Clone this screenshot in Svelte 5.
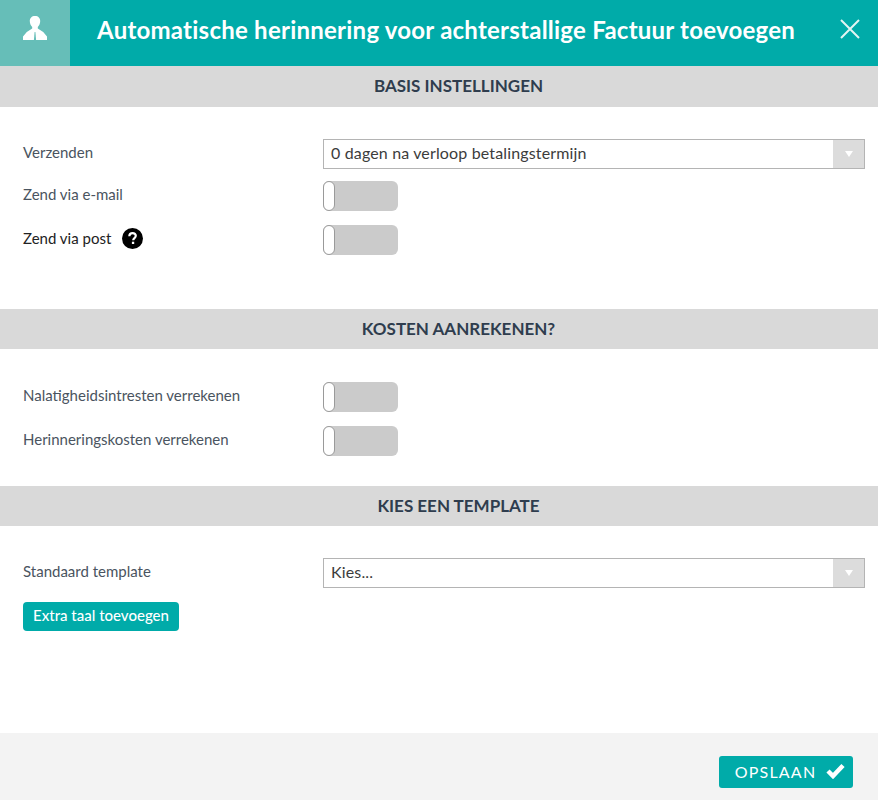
<script lang="ts">
	const arrow = 'M0 0h8L4 6z';
</script>

<div class="modal">
	<header class="head">
		<div class="icon-box">
			<svg width="24" height="24" viewBox="0 0 24 24">
				<path fill="#fff" d="M12 0c3.300 0 5.200 2.100 5.200 5 0 2.500-1 4.600-2.400 5.900v1.700l5.400 3.500 3.800 4.300V24H.0v-3.600l3.800-4.300 5.400-3.500v-1.700C7.800 9.600 6.800 7.500 6.800 5 6.800 2.100 8.700 0 12 0z" />
				<path fill="#66beb8" d="M11.600 16h.8l.7 8h-2.200z" />
			</svg>
		</div>
		<h1>Automatische herinnering voor achterstallige Factuur toevoegen</h1>
		<svg class="close" width="20" height="20" viewBox="0 0 20 20">
			<path d="M1 1l18 18M19 1L1 19" stroke="#e2f5f3" stroke-width="2" fill="none" />
		</svg>
	</header>

	<h2 class="bar first">BASIS INSTELLINGEN</h2>
	<section class="body one">
		<div class="row select-row tight">
			<span class="label">Verzenden</span>
			<div class="select">
				<span>0 dagen na verloop betalingstermijn</span>
				<div class="caret"><svg width="8" height="6" viewBox="0 0 8 6"><path d={arrow} fill="#fff" /></svg></div>
			</div>
		</div>
		<div class="row toggle-row">
			<span class="label">Zend via e-mail</span>
			<div class="toggle"><div class="knob"></div></div>
		</div>
		<div class="row toggle-row">
			<span class="label dark">Zend via post
				<svg class="help" width="21" height="21" viewBox="0 0 21 21">
					<circle cx="10.500" cy="10.500" r="10.500" fill="#000" />
					<path d="M7.300 8.200c.1-2 1.400-3.100 3.300-3.100s3.200 1 3.200 2.700c0 2.300-2.600 2.300-2.600 4.500" fill="none" stroke="#fff" stroke-width="2.200" />
					<rect x="9.900" y="13.700" width="2.300" height="2.300" fill="#fff" />
				</svg>
			</span>
			<div class="toggle"><div class="knob"></div></div>
		</div>
	</section>

	<h2 class="bar">KOSTEN AANREKENEN?</h2>
	<section class="body two">
		<div class="row toggle-row">
			<span class="label">Nalatigheidsintresten verrekenen</span>
			<div class="toggle"><div class="knob"></div></div>
		</div>
		<div class="row toggle-row">
			<span class="label">Herinneringskosten verrekenen</span>
			<div class="toggle"><div class="knob"></div></div>
		</div>
	</section>

	<h2 class="bar">KIES EEN TEMPLATE</h2>
	<section class="body three">
		<div class="row select-row">
			<span class="label">Standaard template</span>
			<div class="select">
				<span>Kies...</span>
				<div class="caret"><svg width="8" height="6" viewBox="0 0 8 6"><path d={arrow} fill="#fff" /></svg></div>
			</div>
		</div>
		<button class="extra">Extra taal toevoegen</button>
	</section>

	<footer class="foot">
		<button class="save">OPSLAAN
			<svg width="19" height="16" viewBox="0 0 19 16">
				<path d="M2 8l5 5L17 2.500" fill="none" stroke="#fff" stroke-width="4.500" />
			</svg>
		</button>
	</footer>
</div>

<style>
	:global(body) {
		background: #fff;
	}

	.modal {
		width: 878px;
		height: 800px;
		display: flex;
		flex-direction: column;
		font-family: Lato, "Liberation Sans", sans-serif;
		color: #4a5460;
		background: #fff;
	}

	.head {
		height: 66px;
		flex: none;
		display: flex;
		align-items: center;
		background: #00aba9;
	}

	.icon-box {
		width: 70px;
		height: 66px;
		padding-bottom: 10px;
		box-sizing: border-box;
		background: #66beb8;
		display: flex;
		align-items: center;
		justify-content: center;
		margin-right: 27px;
	}

	.head h1 {
		margin: 0 0 8px;
		flex: 1;
		font-size: 24px;
		font-weight: 700;
		letter-spacing: 0.24px;
		color: #fff;
		white-space: nowrap;
	}

	.close {
		margin: 0 18px 9px 0;
	}

	.bar {
		margin: 0;
		height: 40px;
		padding: 0 0 2px 39px;
		box-sizing: border-box;
		flex: none;
		display: flex;
		align-items: center;
		justify-content: center;
		background: #d9d9d9;
		color: #2f3d4e;
		font-size: 17px;
		font-weight: 700;
	}

	.first {
		height: 41px;
	}

	.body {
		padding: 0 13px 0 23px;
		flex: none;
		box-sizing: border-box;
	}

	.one {
		height: 202px;
		padding-top: 32px;
	}

	.two {
		height: 137px;
		padding-top: 33px;
	}

	.three {
		height: 207px;
		padding-top: 32px;
	}

	.row {
		display: flex;
		align-items: center;
	}

	.select-row {
		height: 30px;
		margin-bottom: 14px;
	}

	.tight {
		margin-bottom: 12px;
	}

	.toggle-row {
		height: 30px;
		margin-bottom: 14px;
	}

	.label {
		width: 300px;
		flex: none;
		font-size: 15px;
		display: flex;
		align-items: center;
		gap: 11px;
		padding-bottom: 4px;
	}

	.dark {
		color: #222;
	}

	.select {
		flex: 1;
		height: 30px;
		box-sizing: border-box;
		border: 1px solid #b4b4b4;
		padding-left: 7px;
		padding-bottom: 0;
		display: flex;
		align-items: center;
		justify-content: space-between;
		font-size: 16px;
		letter-spacing: 0.15px;
		color: #3c3c3c;
	}

	.select span {
		margin-bottom: 3px;
	}

	.caret {
		width: 31px;
		height: 28px;
		background: #dcdcdc;
		display: flex;
		align-items: center;
		justify-content: center;
	}

	.toggle {
		width: 75px;
		height: 30px;
		border-radius: 6px;
		background: #cbcbcb;
	}

	.knob {
		width: 12px;
		height: 30px;
		box-sizing: border-box;
		border: 1px solid #9a9a9a;
		border-radius: 6px;
		background: #fff;
	}

	.extra {
		display: block;
		height: 29px;
		width: 156px;
		padding: 0 0 3px;
		border: 0;
		border-radius: 4px;
		background: #00aba9;
		color: #fff;
		font-family: inherit;
		font-size: 15px;
		font-weight: 500;
	}

	.foot {
		flex: 1;
		background: #f3f3f3;
		display: flex;
		justify-content: flex-end;
		align-items: flex-start;
		padding: 23px 25px 0 0;
	}

	.save {
		width: 134px;
		height: 32px;
		padding: 0 0 2px 8px;
		box-sizing: border-box;
		border: 0;
		border-radius: 3px;
		background: #00aba9;
		color: #fff;
		font-family: inherit;
		font-size: 16px;
		letter-spacing: 1.2px;
		display: flex;
		align-items: center;
		justify-content: center;
		gap: 10px;
	}
</style>
